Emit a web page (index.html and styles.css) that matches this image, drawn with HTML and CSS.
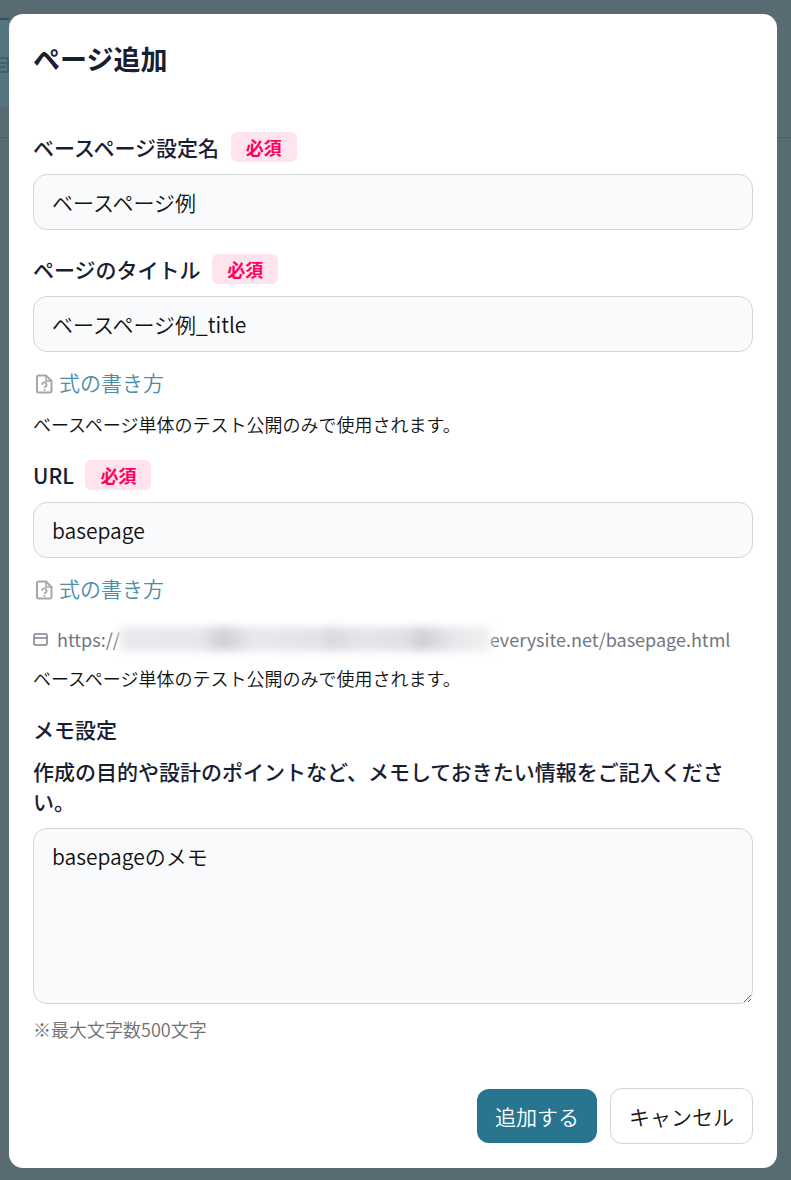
FILE: index.html
```html
<!DOCTYPE html>
<html>
<head>
    <meta name="viewport" content="width=device-width,initial-scale=1.0">
    <title>ページ追加</title>
    <link rel="stylesheet" href="styles.css">
</head>
<body>
    <div class="page-behind">
        <div class="page-tab">
            <svg class="page-tab-icon" width="14" height="20" viewBox="0 0 14 20" fill="none" stroke="#2f5f70" stroke-width="1.5"><rect x="-6" y="3" width="14" height="14" rx="1"/><path d="M-6 8h14M-2 12h8"/></svg>
        </div>
        <div class="page-line"></div>
    </div>

    <div class="overlay">
        <div class="modal">
            <h2 class="modal-title">ページ追加</h2>

            <div class="field">
                <div class="label-row">
                    <label class="label">ベースページ設定名</label>
                    <span class="required">必須</span>
                </div>
                <input class="text-input" type="text" value="ベースページ例">
            </div>

            <div class="field">
                <div class="label-row">
                    <label class="label">ページのタイトル</label>
                    <span class="required">必須</span>
                </div>
                <input class="text-input" type="text" value="ベースページ例_title">
                <a class="help-link" href="#">
                    <svg class="help-icon" width="17" height="20" viewBox="0 0 17 20" fill="none" stroke="#a6a6a6" stroke-width="2"><path d="M2.500 1.500h7.500l5.500 5.500v10a1.500 1.500 0 0 1-1.500 1.500H2.500A1.500 1.500 0 0 1 1 17V3a1.500 1.500 0 0 1 1.500-1.500z"/><path d="M10 2v5h5" stroke-width="1.500"/><path d="M6 10.800a2.300 2.300 0 1 1 3.400 2c-.6.300-.9.600-.9 1.100" stroke-width="1.700"/><path d="M8.500 15v1.600" stroke-width="1.800"/></svg>
                    式の書き方
                </a>
                <p class="note">ベースページ単体のテスト公開のみで使用されます。</p>
            </div>

            <div class="field">
                <div class="label-row">
                    <label class="label">URL</label>
                    <span class="required">必須</span>
                </div>
                <input class="text-input" type="text" value="basepage">
                <a class="help-link" href="#">
                    <svg class="help-icon" width="17" height="20" viewBox="0 0 17 20" fill="none" stroke="#a6a6a6" stroke-width="2"><path d="M2.500 1.500h7.500l5.500 5.500v10a1.500 1.500 0 0 1-1.500 1.500H2.500A1.500 1.500 0 0 1 1 17V3a1.500 1.500 0 0 1 1.500-1.500z"/><path d="M10 2v5h5" stroke-width="1.500"/><path d="M6 10.800a2.300 2.300 0 1 1 3.400 2c-.6.300-.9.600-.9 1.100" stroke-width="1.700"/><path d="M8.500 15v1.600" stroke-width="1.800"/></svg>
                    式の書き方
                </a>
                <div class="url-preview">
                    <svg width="15" height="13" viewBox="0 0 15 13" fill="none" stroke="#7b7f88" stroke-width="1.500"><rect x="1" y="1" width="13" height="11" rx="1.500"/><path d="M1 5h13"/></svg>
                    <span>https://</span><span class="url-blur"></span><span>everysite.net/basepage.html</span>
                </div>
                <p class="note note-url">ベースページ単体のテスト公開のみで使用されます。</p>
            </div>

            <div class="field">
                <div class="memo-title">メモ設定</div>
                <p class="memo-desc">作成の目的や設計のポイントなど、メモしておきたい情報をご記入ください。</p>
                <textarea class="text-area">basepageのメモ</textarea>
                <p class="limit">※最大文字数500文字</p>
            </div>

            <div class="modal-actions">
                <button class="btn btn-primary">追加する</button>
                <button class="btn btn-cancel">キャンセル</button>
            </div>
        </div>
    </div>
</body>
</html>
```

FILE: styles.css
```css
* {
    margin: 0;
    padding: 0;
    box-sizing: border-box;
    font-family: "Noto Sans CJK JP", "Noto Sans", sans-serif;
}

body {
    background: #586b72;
    height: 1180px;
    overflow: hidden;
}

.page-behind {
    height: 138px;
    border-bottom: 1px solid #4f5f66;
}

.page-tab {
    width: 9px;
    height: 88px;
    margin-top: 18px;
    float: left;
    background: #55757f;
    border-top: 2px solid #2d505e;
    overflow: hidden;
}

.page-tab-icon {
    display: block;
    margin-top: 35px;
}

.overlay {
    position: fixed;
    top: 0;
    left: 0;
    width: 100%;
    height: 100%;
    padding: 14px 14px 12px 9px;
}

.modal {
    height: 1154px;
    background: #fff;
    border-radius: 14px;
    padding: 27px 24px 24px;
    display: flex;
    flex-direction: column;
}

.modal-title {
    font-size: 27px;
    line-height: 36px;
    font-weight: 700;
    color: #172033;
    margin-bottom: 55px;
}

.field {
    margin-bottom: 23px;
}

.field:first-of-type {
    margin-bottom: 24px;
}

.label-row {
    display: flex;
    align-items: center;
    gap: 11.6px;
    height: 30px;
    margin-bottom: 12px;
}

.label {
    font-size: 21px;
    font-weight: 500;
    color: #172033;
}

.required {
    width: 66px;
    height: 30px;
    line-height: 30px;
    text-align: center;
    background: #ffe4ee;
    color: #ff0062;
    font-size: 18px;
    font-weight: 700;
    border-radius: 6px;
}

.text-input {
    display: block;
    width: 100%;
    height: 56px;
    padding: 0 18px;
    font-size: 21px;
    font-weight: 350;
    color: #111;
    background: #f9fafb;
    border: 1px solid #d1d5db;
    border-radius: 14px;
    outline: none;
}

.help-link {
    display: flex;
    align-items: center;
    gap: 6px;
    height: 30px;
    margin-top: 15px;
    padding-left: 3px;
    font-size: 21px;
    font-weight: 350;
    color: #4c8ea6;
    text-decoration: none;
}

.help-icon {
    margin-top: 3px;
}

.note {
    margin-top: 14px;
    font-size: 18px;
    font-weight: 350;
    line-height: 26px;
    color: #111;
}

.note-url {
    margin-top: 13px;
}

.url-preview {
    display: flex;
    align-items: center;
    height: 26px;
    margin-top: 23px;
    font-size: 18px;
    color: #72767f;
    white-space: nowrap;
}

.url-preview svg {
    margin-right: 9px;
}

.url-blur {
    width: 370px;
    height: 24px;
    background: linear-gradient(90deg, #e9eaed 0%, #e6e7ea 22%, #cfd0d5 28%, #e8e9ec 36%, #e2e3e6 55%, #d9dade 56%, #e5e6e9 66%, #dfe0e4 78%, #cfd0d5 81%, #e6e7ea 90%, #f0f0f2 100%);
    filter: blur(4px);
}

.memo-title {
    height: 30px;
    line-height: 30px;
    font-size: 21px;
    font-weight: 500;
    color: #172033;
    margin-bottom: 12px;
}

.memo-desc {
    font-size: 21px;
    line-height: 30px;
    font-weight: 500;
    color: #172033;
    margin-bottom: 12px;
}

.text-area {
    display: block;
    width: 100%;
    height: 176px;
    padding: 12px 18px;
    font-size: 21px;
    font-weight: 350;
    line-height: 30px;
    color: #111;
    background: #f9fafb;
    border: 1px solid #d1d5db;
    border-radius: 14px;
    outline: none;
    resize: vertical;
}

.limit {
    margin-top: 12px;
    font-size: 18px;
    font-weight: 350;
    line-height: 26px;
    color: #6f6f6f;
}

.modal-actions {
    margin-top: auto;
    display: flex;
    justify-content: flex-end;
    align-items: center;
    gap: 13px;
}

.btn {
    height: 54px;
    font-size: 21px;
    font-weight: 350;
    border-radius: 12px;
    cursor: pointer;
}

.btn-primary {
    width: 120px;
    background: #27758f;
    color: #fff;
    border: none;
}

.btn-cancel {
    width: 143px;
    height: 56px;
    background: #fff;
    color: #111;
    border: 1px solid #d4d4d8;
}
```
